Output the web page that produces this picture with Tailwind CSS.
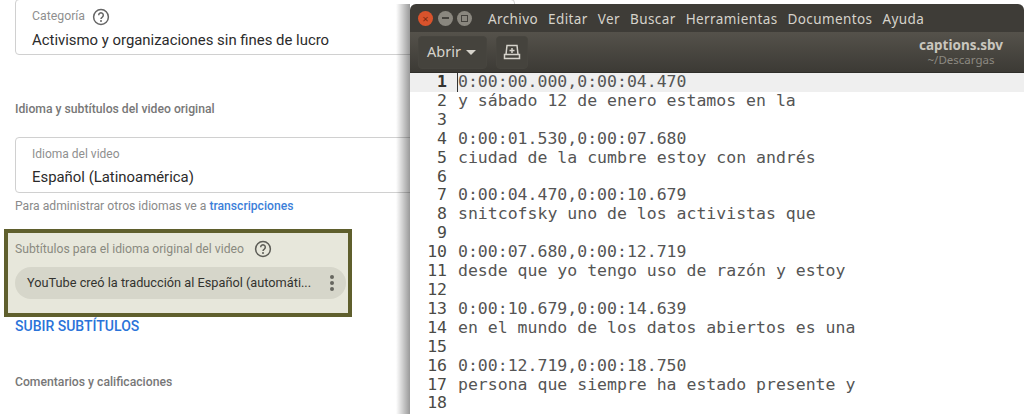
<!DOCTYPE html>
<html lang="es">

<head>
    <meta charset="UTF-8">
    <title>captions.sbv</title>
    <script src="https://cdn.jsdelivr.net/npm/@tailwindcss/browser@4"></script>
</head>

<body class="relative w-[1024px] h-[414px] overflow-hidden bg-white font-['Roboto',sans-serif]">

    <!-- Panel de detalles del video -->
    <div class="h-[414px] pl-[15px]">
        <div class="w-[500px] h-[56px] -mt-px border border-[#d0d0d0] rounded-[4px] pl-[16px] pt-[9px]">
            <div class="flex items-center gap-[7px] h-[15px] text-[12.3px] leading-[15px] text-[#8f8f8f]">
                Categoría
                <svg class="w-[18px] h-[18px]" viewBox="0 0 18 18" fill="none">
                    <circle cx="9" cy="9" r="7.4" stroke="#666" stroke-width="1.5" />
                    <path d="M6.7 7.2a2.3 2.3 0 1 1 3.6 1.9c-.8.5-1.3 1-1.3 2" stroke="#666" stroke-width="1.5" />
                    <circle cx="9" cy="13" r="1" fill="#666" />
                </svg>
            </div>
            <p class="mt-[7px] text-[14.9px] leading-[18px] text-[#2b2b2b]">Activismo y organizaciones sin fines de lucro</p>
        </div>

        <h2 class="mt-[47px] text-[12.2px] leading-[14px] font-medium text-[#777]">Idioma y subtítulos del video original</h2>

        <div class="w-[500px] h-[56px] mt-[21px] border border-[#d0d0d0] rounded-[4px] pl-[16px] pt-[9px]">
            <p class="text-[12px] leading-[15px] text-[#8f8f8f]">Idioma del video</p>
            <p class="mt-[6px] text-[14.9px] leading-[18px] text-[#2b2b2b]">Español (Latinoamérica)</p>
        </div>
        <p class="mt-[6px] text-[12.15px] leading-[14px] text-[#8a8a8a]">Para administrar otros idiomas ve a <span class="font-medium text-[#3d7fd9]">transcripciones</span></p>

        <!-- Recuadro resaltado -->
        <div class="w-[348px] h-[88px] mt-[16px] -ml-[11px] pl-[7px] pt-[7px] bg-[#e7e7db] border-[4px] border-[#5f5f2d]">
            <div class="flex items-center gap-[10px] h-[18px] text-[12.2px] leading-[15px] text-[#8a8a80]">
                Subtítulos para el idioma original del video
                <svg class="w-[18px] h-[18px]" viewBox="0 0 18 18" fill="none">
                    <circle cx="9" cy="9" r="7.4" stroke="#5c5c56" stroke-width="1.5" />
                    <path d="M6.7 7.2a2.3 2.3 0 1 1 3.6 1.9c-.8.5-1.3 1-1.3 2" stroke="#5c5c56" stroke-width="1.5" />
                    <circle cx="9" cy="13" r="1" fill="#5c5c56" />
                </svg>
            </div>
            <div class="flex items-center justify-between w-[331px] h-[32px] mt-[9px] pl-[12px] pr-[12px] rounded-full bg-[#d6d6ca] text-[12.75px] text-[#33332f]">
                <span>YouTube creó la traducción al Español (automáti...</span>
                <span class="flex flex-col gap-[2px]">
                    <i class="block w-[4px] h-[4px] rounded-full bg-[#66665f]"></i>
                    <i class="block w-[4px] h-[4px] rounded-full bg-[#66665f]"></i>
                    <i class="block w-[4px] h-[4px] rounded-full bg-[#66665f]"></i>
                </span>
            </div>
        </div>

        <a href="#" class="block mt-[1px] text-[14px] leading-[16px] font-medium text-[#2a73d9]">SUBIR SUBTÍTULOS</a>
        <h2 class="mt-[41px] text-[12.2px] leading-[14px] font-medium text-[#777]">Comentarios y calificaciones</h2>
    </div>

    <!-- Ventana de gedit -->
    <div class="absolute left-[410px] top-[4px] w-[614px] h-[410px] overflow-hidden rounded-t-[6px] bg-white font-['Noto_Sans',sans-serif]">
        <div class="flex items-center h-[28px] pl-[8px] bg-[#3e3c37] text-[#d6d3cb] text-[13.5px]">
            <span class="flex items-center justify-center w-[15px] h-[15px] rounded-full bg-[#d9532c] text-[#7a2a12] text-[11px] leading-none">×</span>
            <span class="flex items-center justify-center w-[15px] h-[15px] ml-[5px] rounded-full bg-[#8a877f]"><i class="block w-[7px] h-[1.5px] bg-[#44423d]"></i></span>
            <span class="flex items-center justify-center w-[15px] h-[15px] ml-[4px] rounded-full bg-[#8a877f]"><i class="block w-[7px] h-[7px] border border-[#44423d]"></i></span>
            <nav class="flex gap-[10px] ml-[16px] pt-[2px] tracking-[0.4px]">
                <span>Archivo</span><span>Editar</span><span>Ver</span><span>Buscar</span><span>Herramientas</span><span>Documentos</span><span>Ayuda</span>
            </nav>
        </div>
        <div class="flex items-center h-[41px] pl-[8px] bg-gradient-to-b from-[#55524b] to-[#3c3a35] border-b border-[#2f2e2a]">
            <button class="flex items-center gap-[5px] w-[69px] h-[33px] pl-[8px] rounded-[4px] border border-[#47453f] bg-[#45433d] text-[14.5px] text-[#d6d3cb]">
                Abrir
                <i class="block w-0 h-0 border-x-[5px] border-x-transparent border-t-[5px] border-t-[#d6d3cb]"></i>
            </button>
            <button class="flex items-center justify-center w-[32px] h-[33px] ml-[9px] rounded-[4px] border border-[#47453f] bg-[#45433d]">
                <svg class="w-[18px] h-[16px]" viewBox="0 0 18 16" fill="none" stroke="#d6d3cb" stroke-width="1.5">
                    <path d="M4 1.5h10l1 9H3zM1.5 10.5h15v4h-15z" />
                    <path d="M9 4v5M6.5 6.5h5" />
                </svg>
            </button>
            <div class="w-[126px] ml-auto text-center">
                <p class="text-[13.5px] leading-[15px] font-bold text-[#c9c6be]">captions.sbv</p>
                <p class="text-[11.5px] leading-[14px] text-[#8c8981]">~/Descargas</p>
            </div>
        </div>
        <!-- Texto con números de línea -->
        <div class="font-['DejaVu_Sans_Mono',monospace] text-[16.5px] leading-[18.9px] text-[#555]">
            <div class="flex bg-[#efefef]"><span class="w-[38px] pr-[1px] text-right font-bold text-[#33332f]">1</span><span class="ml-[9px] border-l border-[#333]">0:00:00.000,0:00:04.470</span></div>
            <div class="flex"><span class="w-[38px] pr-[1px] text-right text-[#4a4a46]">2</span><span class="ml-[10px]">y sábado 12 de enero estamos en la</span></div>
            <div class="flex"><span class="w-[38px] pr-[1px] text-right text-[#4a4a46]">3</span></div>
            <div class="flex"><span class="w-[38px] pr-[1px] text-right text-[#4a4a46]">4</span><span class="ml-[10px]">0:00:01.530,0:00:07.680</span></div>
            <div class="flex"><span class="w-[38px] pr-[1px] text-right text-[#4a4a46]">5</span><span class="ml-[10px]">ciudad de la cumbre estoy con andrés</span></div>
            <div class="flex"><span class="w-[38px] pr-[1px] text-right text-[#4a4a46]">6</span></div>
            <div class="flex"><span class="w-[38px] pr-[1px] text-right text-[#4a4a46]">7</span><span class="ml-[10px]">0:00:04.470,0:00:10.679</span></div>
            <div class="flex"><span class="w-[38px] pr-[1px] text-right text-[#4a4a46]">8</span><span class="ml-[10px]">snitcofsky uno de los activistas que</span></div>
            <div class="flex"><span class="w-[38px] pr-[1px] text-right text-[#4a4a46]">9</span></div>
            <div class="flex"><span class="w-[38px] pr-[1px] text-right text-[#4a4a46]">10</span><span class="ml-[10px]">0:00:07.680,0:00:12.719</span></div>
            <div class="flex"><span class="w-[38px] pr-[1px] text-right text-[#4a4a46]">11</span><span class="ml-[10px]">desde que yo tengo uso de razón y estoy</span></div>
            <div class="flex"><span class="w-[38px] pr-[1px] text-right text-[#4a4a46]">12</span></div>
            <div class="flex"><span class="w-[38px] pr-[1px] text-right text-[#4a4a46]">13</span><span class="ml-[10px]">0:00:10.679,0:00:14.639</span></div>
            <div class="flex"><span class="w-[38px] pr-[1px] text-right text-[#4a4a46]">14</span><span class="ml-[10px]">en el mundo de los datos abiertos es una</span></div>
            <div class="flex"><span class="w-[38px] pr-[1px] text-right text-[#4a4a46]">15</span></div>
            <div class="flex"><span class="w-[38px] pr-[1px] text-right text-[#4a4a46]">16</span><span class="ml-[10px]">0:00:12.719,0:00:18.750</span></div>
            <div class="flex"><span class="w-[38px] pr-[1px] text-right text-[#4a4a46]">17</span><span class="ml-[10px]">persona que siempre ha estado presente y</span></div>
            <div class="flex"><span class="w-[38px] pr-[1px] text-right text-[#4a4a46]">18</span></div>
        </div>
    </div>
    <!-- Sombra de la ventana -->
    <div class="absolute left-[396px] top-[4px] w-[14px] h-[410px] bg-gradient-to-r from-black/0 to-black/40"></div>
</body>

</html>
